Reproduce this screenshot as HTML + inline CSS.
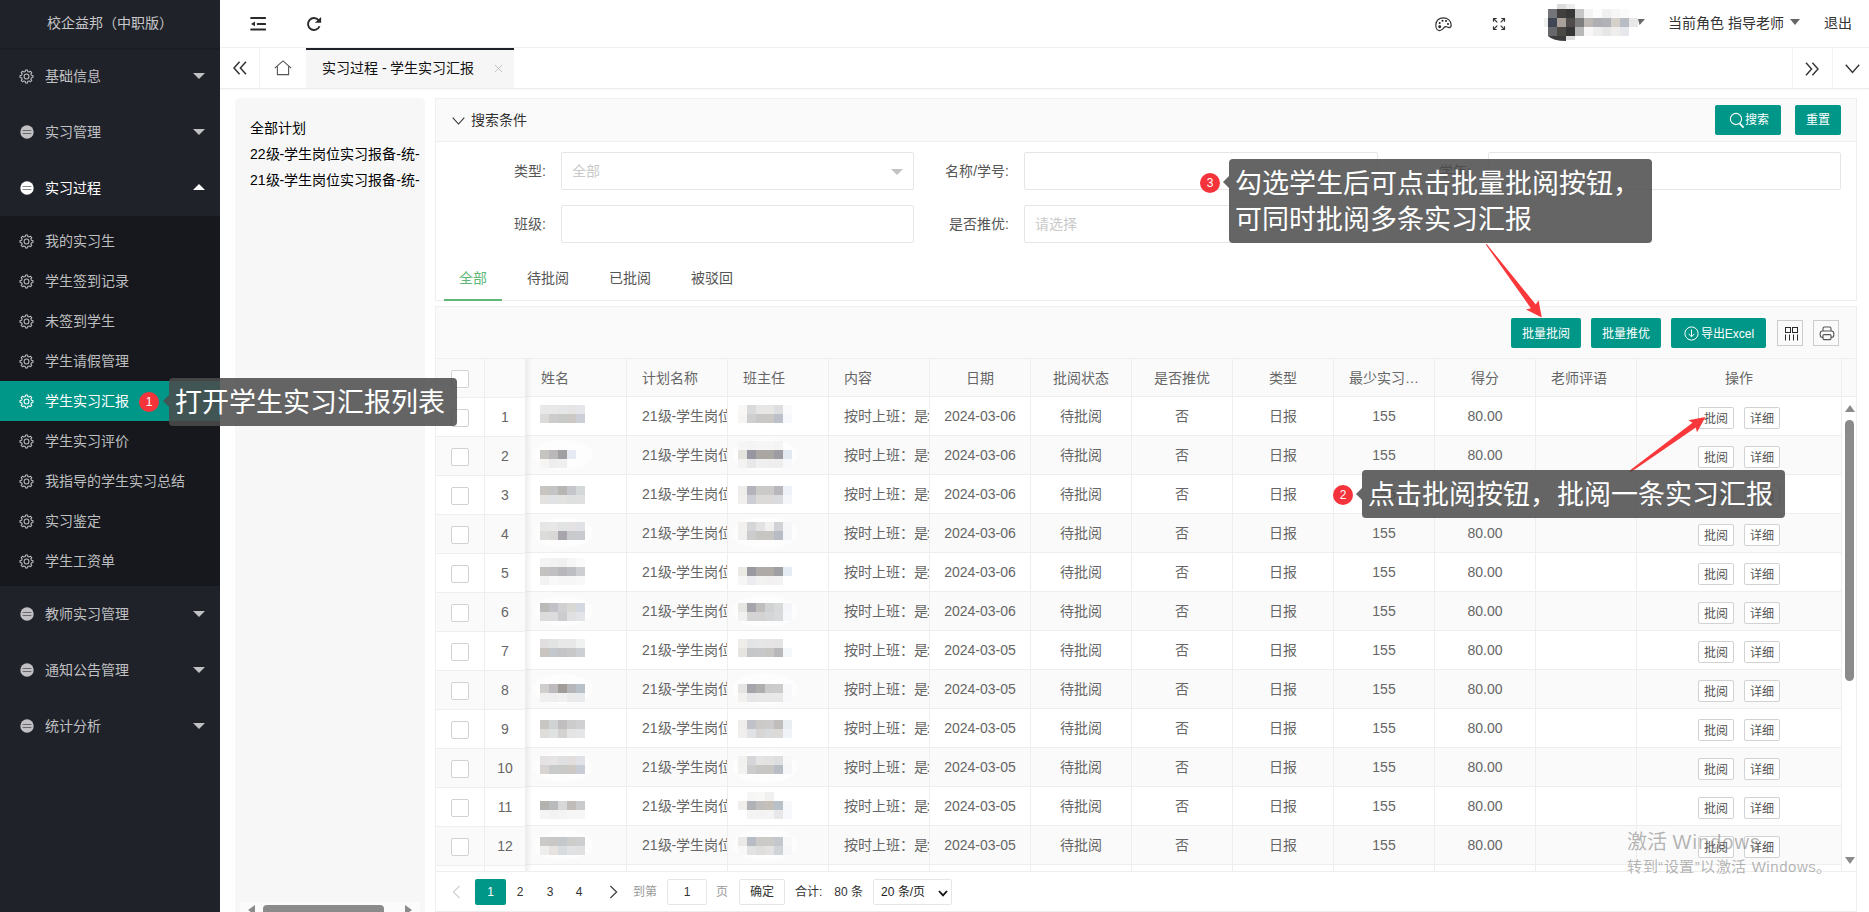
<!DOCTYPE html>
<html lang="zh-CN"><head><meta charset="utf-8"><title>校企益邦</title>
<style>
*{box-sizing:border-box;margin:0;padding:0}
html,body{width:1869px;height:912px;overflow:hidden;background:#fff}
body{font-family:"Liberation Sans",sans-serif;font-size:14px;color:#333;position:relative}
.abs{position:absolute}
/* sidebar */
#side{position:absolute;left:0;top:0;width:220px;height:912px;background:#20222a;color:rgba(255,255,255,.7)}
#logo{position:absolute;left:0;top:0;width:220px;height:48px;line-height:46px;text-align:center;color:rgba(255,255,255,.75);font-size:14.5px;box-shadow:0 1px 2px rgba(0,0,0,.25);padding-right:8px}
.m1{position:absolute;left:0;width:220px;height:56px;line-height:56px;font-size:14px;color:rgba(255,255,255,.72);padding-left:45px}
.m1.on{color:#fff}
.m1 .ic{position:absolute;left:20px;top:21px;width:14px;height:14px}
.m1 .car{position:absolute;left:193px;top:25px;width:0;height:0;border-left:6px solid transparent;border-right:6px solid transparent;border-top:6px solid rgba(255,255,255,.72)}
.m1.on .car{border-top:none;border-bottom:6px solid #fff;top:24px}
#sub{position:absolute;left:0;top:216px;width:220px;height:370px;background:#16181d}
.m2{position:absolute;left:0;width:220px;height:40px;line-height:40px;font-size:14px;color:rgba(255,255,255,.72);padding-left:45px}
.m2.sel{background:#009688;color:#fff}
.m2 svg{position:absolute;left:20px;top:13px;width:14px;height:14px}
.m1 .ic svg{display:block;width:100%;height:100%}
.m1 .ic.g{left:19px;top:21px;width:15px;height:15px}
.m1 .ic.d{left:20px;top:21px;width:14px;height:14px}
.m2 svg{left:19px;top:13px;width:15px;height:15px}
#logo{font-size:14px;padding-right:0}
/* header */
#hdr{position:absolute;left:220px;top:0;width:1649px;height:48px;background:#fff;border-bottom:1px solid #f0f0f0}
#hdr .abs{margin-left:-220px}
.ht{height:47px;line-height:46px;font-size:14px;color:#333;white-space:nowrap}
#tabs{position:absolute;left:220px;top:48px;width:1649px;height:41px;background:#fff;border-bottom:1px solid #ececec;box-shadow:0 1px 2px rgba(0,0,0,.04)}
.vsep{top:0;width:1px;height:40px;background:#f3f3f3}
#tabon{position:absolute;left:86px;top:0;width:208px;height:40px;background:#f6f6f6;border-top:2px solid #20222a;line-height:37px;font-size:14px;color:#111;padding-left:16px;white-space:nowrap}
/* left panel */
#lp{position:absolute;left:235px;top:98px;width:190px;height:814px;background:#f7f7f7;border-radius:5px 5px 0 0}
.lpt{position:absolute;left:15px;font-size:14px;color:#000;line-height:16px;white-space:nowrap}
#lpsb{position:absolute;left:5px;top:804px;width:180px;height:10px;background:#fbfbfb}
#lpsb .th{position:absolute;left:23px;top:3px;width:121px;height:10px;border-radius:4px;background:#8b8b8b}
#lpsb .al{position:absolute;left:8px;top:3px;border-top:5px solid transparent;border-bottom:5px solid transparent;border-right:7px solid #8b8b8b}
#lpsb .ar{position:absolute;left:165px;top:3px;border-top:5px solid transparent;border-bottom:5px solid transparent;border-left:7px solid #8b8b8b}
/* card 1 */
#card1{position:absolute;left:436px;top:98px;width:1421px;height:203px;background:#fff;border:1px solid #eee;border-top-color:#f0f0f0}
#c1h{position:absolute;left:0;top:0;width:1419px;height:43px;background:#fafafa;border-bottom:1px solid #eee}
.gbtn{position:absolute;background:#009688;color:#fff;font-size:12px;text-align:center;border-radius:2px;white-space:nowrap}
.flab{position:absolute;height:38px;line-height:36px;text-align:right;font-size:14px;color:#555;white-space:nowrap}
.finp{position:absolute;height:38px;border:1px solid #e6e6e6;border-radius:2px;background:#fff;line-height:36px;padding-left:10px;font-size:14px}
.finp .ph{color:#c9c9c9}
.selcar{position:absolute;right:10px;top:16px;border-left:6px solid transparent;border-right:6px solid transparent;border-top:6px solid #c2c2c2}
.tab{position:absolute;top:160px;height:41px;line-height:38px;text-align:center;font-size:14px;color:#555}
.tab.on{color:#5fb878;border-bottom:2px solid #5fb878}
#card1{left:435px;width:1422px}
#c1h{width:1420px}
/* card2 */
#card2{position:absolute;left:435px;top:306px;width:1422px;height:606px;background:#fff;border:1px solid #eee;overflow:hidden}
#card2>*{margin-left:-1px;margin-top:-1px}
#tbar{position:absolute;left:1px;top:1px;width:1420px;height:52px;background:#fafafa;border-bottom:1px solid #eee}
.ibtn{position:absolute;width:26px;height:26px;border:1px solid #ccc;background:#fafafa}
#thead{position:absolute;left:1px;width:1420px;height:40px;background:#fafafa;border-bottom:1px solid #eee}
.vl{position:absolute;top:53px;width:1px;height:513px;background:#eee}
.th{position:absolute;height:38px;line-height:38px;font-size:14px;color:#666;white-space:nowrap;overflow:hidden}
.th.l,.td.l{text-align:left;padding-left:15px}
.th.c,.td.c{text-align:center}
.tr{position:absolute;left:1px;width:1406px;border-bottom:1px solid #eee;background:#fff}
.tr.ev{background:#fafafa}
.td{position:absolute;top:0;height:38px;line-height:38px;font-size:14px;color:#666;white-space:nowrap;overflow:hidden}
.cb{position:absolute;width:18px;height:18px;border:1px solid #d2d2d2;border-radius:2px;background:#fff}
.xb{position:absolute;top:11px;width:36px;height:21px;line-height:19px;border:1px solid #d2d2d2;border-radius:2px;background:#fff;font-size:12px;color:#555;text-align:center}
#fshadow{position:absolute;left:91px;top:53px;width:6px;height:513px;background:linear-gradient(90deg,rgba(0,0,0,.06),rgba(0,0,0,0))}
#vsb{position:absolute;left:1407px;top:92px;width:14px;height:474px;background:#fff}
#vsb .up{position:absolute;left:3px;top:8px;border-left:5px solid transparent;border-right:5px solid transparent;border-bottom:7px solid #8b8b8b}
#vsb .dn{position:absolute;left:3px;top:459px;border-left:5px solid transparent;border-right:5px solid transparent;border-top:7px solid #8b8b8b}
#vsb .th2{position:absolute;left:3px;top:23px;width:9px;height:260px;border-radius:5px;background:#8b8b8b}
#pg{position:absolute;left:1px;top:566px;width:1420px;height:40px;background:#fff;border-top:1px solid #eee}
.pcur{width:31px;height:26px;line-height:26px;background:#009688;color:#fff;font-size:12px;text-align:center;border-radius:2px}
.pn{top:8px;width:20px;height:26px;line-height:26px;font-size:12px;color:#333;text-align:center}
.pt{top:8px;height:26px;line-height:26px;font-size:12px;white-space:nowrap}
.pin{height:26px;line-height:24px;border:1px solid #e6e6e6;border-radius:2px;font-size:12px;color:#333;text-align:center;white-space:nowrap}
.tip{position:absolute;background:rgba(76,76,76,.86);color:#fff;font-size:27px;border-radius:4px;white-space:nowrap}
.tarr{position:absolute;border-top:6px solid transparent;border-bottom:6px solid transparent;border-right:6px solid rgba(76,76,76,.86)}
.bdg{position:absolute;width:20px;height:20px;border-radius:50%;background:#f5333a;color:#fff;font-size:12px;line-height:20px;text-align:center}
/* card2 v2 */
#card2>*{margin:0}
#c2in{position:absolute;left:-436px;top:-307px;width:1869px;height:912px}
#tbar{left:436px;top:307px;width:1420px;height:52px}
#thead{left:436px;top:359px;width:1420px;height:39px}
.vl{top:359px;height:512px}
.tr{left:436px;width:1406px}
.xb{top:9px;height:22px;line-height:20px}
#fshadow{left:526px;top:359px;height:512px}
#vsb{left:1842px;top:398px;width:14px;height:473px}
#pg{left:436px;top:871px;width:1420px;height:40px}
.pn,.pt{top:879px}
.td{line-height:36px}
/* v3 rows */
.tr{left:526px;width:1316px}
.trl{position:absolute;left:436px;width:89px;border-bottom:1px solid #eee;background:#fff}
.trl.ev{background:#fafafa}
.td{line-height:38px}
.xb{top:10px}
#thead{height:38px}
#theadl{position:absolute;left:436px;top:359px;width:89px;height:39px;background:#fafafa;border-bottom:1px solid #eee}
.tab{top:161px;line-height:36px}
.gbtn{line-height:31px !important}
.flab{line-height:38px}
#vsb .up{top:7px}
#vsb .th2{top:22px;height:261px}
#c2in .gbtn{line-height:33px !important}
.xb{line-height:22px}

</style></head>
<body>
<div id="side">
<div id="logo">校企益邦（中职版）</div>
<div class="m1" style="top:48px"><span class="ic g"><svg viewBox="0 0 16 16"><path d="M6.66 2.77 L6.90 1.09 L9.10 1.09 L9.34 2.77 L10.75 3.35 L12.11 2.34 L13.66 3.89 L12.65 5.25 L13.23 6.66 L14.91 6.90 L14.91 9.10 L13.23 9.34 L12.65 10.75 L13.66 12.11 L12.11 13.66 L10.75 12.65 L9.34 13.23 L9.10 14.91 L6.90 14.91 L6.66 13.23 L5.25 12.65 L3.89 13.66 L2.34 12.11 L3.35 10.75 L2.77 9.34 L1.09 9.10 L1.09 6.90 L2.77 6.66 L3.35 5.25 L2.34 3.89 L3.89 2.34 L5.25 3.35Z" fill="none" stroke="currentColor" stroke-width="1.1" stroke-linejoin="round"/><circle cx="8" cy="8" r="2.6" fill="none" stroke="currentColor" stroke-width="1.1"/></svg></span>基础信息<i class="car"></i></div>
<div class="m1" style="top:104px"><span class="ic d"><svg viewBox="0 0 14 14"><circle cx="7" cy="7" r="6.7" fill="currentColor"/><rect x="2.6" y="5" width="8.8" height="1" fill="#20222a" opacity=".55"/><rect x="2.6" y="8" width="8.8" height="1" fill="#20222a" opacity=".55"/></svg></span>实习管理<i class="car"></i></div>
<div class="m1 on" style="top:160px"><span class="ic d"><svg viewBox="0 0 14 14"><circle cx="7" cy="7" r="6.7" fill="currentColor"/><rect x="2.6" y="5" width="8.8" height="1" fill="#20222a" opacity=".55"/><rect x="2.6" y="8" width="8.8" height="1" fill="#20222a" opacity=".55"/></svg></span>实习过程<i class="car"></i></div>
<div id="sub">
<div class="m2" style="top:5px"><svg viewBox="0 0 16 16"><path d="M6.66 2.77 L6.90 1.09 L9.10 1.09 L9.34 2.77 L10.75 3.35 L12.11 2.34 L13.66 3.89 L12.65 5.25 L13.23 6.66 L14.91 6.90 L14.91 9.10 L13.23 9.34 L12.65 10.75 L13.66 12.11 L12.11 13.66 L10.75 12.65 L9.34 13.23 L9.10 14.91 L6.90 14.91 L6.66 13.23 L5.25 12.65 L3.89 13.66 L2.34 12.11 L3.35 10.75 L2.77 9.34 L1.09 9.10 L1.09 6.90 L2.77 6.66 L3.35 5.25 L2.34 3.89 L3.89 2.34 L5.25 3.35Z" fill="none" stroke="currentColor" stroke-width="1.1" stroke-linejoin="round"/><circle cx="8" cy="8" r="2.6" fill="none" stroke="currentColor" stroke-width="1.1"/></svg>我的实习生</div>
<div class="m2" style="top:45px"><svg viewBox="0 0 16 16"><path d="M6.66 2.77 L6.90 1.09 L9.10 1.09 L9.34 2.77 L10.75 3.35 L12.11 2.34 L13.66 3.89 L12.65 5.25 L13.23 6.66 L14.91 6.90 L14.91 9.10 L13.23 9.34 L12.65 10.75 L13.66 12.11 L12.11 13.66 L10.75 12.65 L9.34 13.23 L9.10 14.91 L6.90 14.91 L6.66 13.23 L5.25 12.65 L3.89 13.66 L2.34 12.11 L3.35 10.75 L2.77 9.34 L1.09 9.10 L1.09 6.90 L2.77 6.66 L3.35 5.25 L2.34 3.89 L3.89 2.34 L5.25 3.35Z" fill="none" stroke="currentColor" stroke-width="1.1" stroke-linejoin="round"/><circle cx="8" cy="8" r="2.6" fill="none" stroke="currentColor" stroke-width="1.1"/></svg>学生签到记录</div>
<div class="m2" style="top:85px"><svg viewBox="0 0 16 16"><path d="M6.66 2.77 L6.90 1.09 L9.10 1.09 L9.34 2.77 L10.75 3.35 L12.11 2.34 L13.66 3.89 L12.65 5.25 L13.23 6.66 L14.91 6.90 L14.91 9.10 L13.23 9.34 L12.65 10.75 L13.66 12.11 L12.11 13.66 L10.75 12.65 L9.34 13.23 L9.10 14.91 L6.90 14.91 L6.66 13.23 L5.25 12.65 L3.89 13.66 L2.34 12.11 L3.35 10.75 L2.77 9.34 L1.09 9.10 L1.09 6.90 L2.77 6.66 L3.35 5.25 L2.34 3.89 L3.89 2.34 L5.25 3.35Z" fill="none" stroke="currentColor" stroke-width="1.1" stroke-linejoin="round"/><circle cx="8" cy="8" r="2.6" fill="none" stroke="currentColor" stroke-width="1.1"/></svg>未签到学生</div>
<div class="m2" style="top:125px"><svg viewBox="0 0 16 16"><path d="M6.66 2.77 L6.90 1.09 L9.10 1.09 L9.34 2.77 L10.75 3.35 L12.11 2.34 L13.66 3.89 L12.65 5.25 L13.23 6.66 L14.91 6.90 L14.91 9.10 L13.23 9.34 L12.65 10.75 L13.66 12.11 L12.11 13.66 L10.75 12.65 L9.34 13.23 L9.10 14.91 L6.90 14.91 L6.66 13.23 L5.25 12.65 L3.89 13.66 L2.34 12.11 L3.35 10.75 L2.77 9.34 L1.09 9.10 L1.09 6.90 L2.77 6.66 L3.35 5.25 L2.34 3.89 L3.89 2.34 L5.25 3.35Z" fill="none" stroke="currentColor" stroke-width="1.1" stroke-linejoin="round"/><circle cx="8" cy="8" r="2.6" fill="none" stroke="currentColor" stroke-width="1.1"/></svg>学生请假管理</div>
<div class="m2 sel" style="top:165px"><svg viewBox="0 0 16 16"><path d="M6.66 2.77 L6.90 1.09 L9.10 1.09 L9.34 2.77 L10.75 3.35 L12.11 2.34 L13.66 3.89 L12.65 5.25 L13.23 6.66 L14.91 6.90 L14.91 9.10 L13.23 9.34 L12.65 10.75 L13.66 12.11 L12.11 13.66 L10.75 12.65 L9.34 13.23 L9.10 14.91 L6.90 14.91 L6.66 13.23 L5.25 12.65 L3.89 13.66 L2.34 12.11 L3.35 10.75 L2.77 9.34 L1.09 9.10 L1.09 6.90 L2.77 6.66 L3.35 5.25 L2.34 3.89 L3.89 2.34 L5.25 3.35Z" fill="none" stroke="currentColor" stroke-width="1.1" stroke-linejoin="round"/><circle cx="8" cy="8" r="2.6" fill="none" stroke="currentColor" stroke-width="1.1"/></svg>学生实习汇报</div>
<div class="m2" style="top:205px"><svg viewBox="0 0 16 16"><path d="M6.66 2.77 L6.90 1.09 L9.10 1.09 L9.34 2.77 L10.75 3.35 L12.11 2.34 L13.66 3.89 L12.65 5.25 L13.23 6.66 L14.91 6.90 L14.91 9.10 L13.23 9.34 L12.65 10.75 L13.66 12.11 L12.11 13.66 L10.75 12.65 L9.34 13.23 L9.10 14.91 L6.90 14.91 L6.66 13.23 L5.25 12.65 L3.89 13.66 L2.34 12.11 L3.35 10.75 L2.77 9.34 L1.09 9.10 L1.09 6.90 L2.77 6.66 L3.35 5.25 L2.34 3.89 L3.89 2.34 L5.25 3.35Z" fill="none" stroke="currentColor" stroke-width="1.1" stroke-linejoin="round"/><circle cx="8" cy="8" r="2.6" fill="none" stroke="currentColor" stroke-width="1.1"/></svg>学生实习评价</div>
<div class="m2" style="top:245px"><svg viewBox="0 0 16 16"><path d="M6.66 2.77 L6.90 1.09 L9.10 1.09 L9.34 2.77 L10.75 3.35 L12.11 2.34 L13.66 3.89 L12.65 5.25 L13.23 6.66 L14.91 6.90 L14.91 9.10 L13.23 9.34 L12.65 10.75 L13.66 12.11 L12.11 13.66 L10.75 12.65 L9.34 13.23 L9.10 14.91 L6.90 14.91 L6.66 13.23 L5.25 12.65 L3.89 13.66 L2.34 12.11 L3.35 10.75 L2.77 9.34 L1.09 9.10 L1.09 6.90 L2.77 6.66 L3.35 5.25 L2.34 3.89 L3.89 2.34 L5.25 3.35Z" fill="none" stroke="currentColor" stroke-width="1.1" stroke-linejoin="round"/><circle cx="8" cy="8" r="2.6" fill="none" stroke="currentColor" stroke-width="1.1"/></svg>我指导的学生实习总结</div>
<div class="m2" style="top:285px"><svg viewBox="0 0 16 16"><path d="M6.66 2.77 L6.90 1.09 L9.10 1.09 L9.34 2.77 L10.75 3.35 L12.11 2.34 L13.66 3.89 L12.65 5.25 L13.23 6.66 L14.91 6.90 L14.91 9.10 L13.23 9.34 L12.65 10.75 L13.66 12.11 L12.11 13.66 L10.75 12.65 L9.34 13.23 L9.10 14.91 L6.90 14.91 L6.66 13.23 L5.25 12.65 L3.89 13.66 L2.34 12.11 L3.35 10.75 L2.77 9.34 L1.09 9.10 L1.09 6.90 L2.77 6.66 L3.35 5.25 L2.34 3.89 L3.89 2.34 L5.25 3.35Z" fill="none" stroke="currentColor" stroke-width="1.1" stroke-linejoin="round"/><circle cx="8" cy="8" r="2.6" fill="none" stroke="currentColor" stroke-width="1.1"/></svg>实习鉴定</div>
<div class="m2" style="top:325px"><svg viewBox="0 0 16 16"><path d="M6.66 2.77 L6.90 1.09 L9.10 1.09 L9.34 2.77 L10.75 3.35 L12.11 2.34 L13.66 3.89 L12.65 5.25 L13.23 6.66 L14.91 6.90 L14.91 9.10 L13.23 9.34 L12.65 10.75 L13.66 12.11 L12.11 13.66 L10.75 12.65 L9.34 13.23 L9.10 14.91 L6.90 14.91 L6.66 13.23 L5.25 12.65 L3.89 13.66 L2.34 12.11 L3.35 10.75 L2.77 9.34 L1.09 9.10 L1.09 6.90 L2.77 6.66 L3.35 5.25 L2.34 3.89 L3.89 2.34 L5.25 3.35Z" fill="none" stroke="currentColor" stroke-width="1.1" stroke-linejoin="round"/><circle cx="8" cy="8" r="2.6" fill="none" stroke="currentColor" stroke-width="1.1"/></svg>学生工资单</div>
</div>
<div class="m1" style="top:586px"><span class="ic d"><svg viewBox="0 0 14 14"><circle cx="7" cy="7" r="6.7" fill="currentColor"/><rect x="2.6" y="5" width="8.8" height="1" fill="#20222a" opacity=".55"/><rect x="2.6" y="8" width="8.8" height="1" fill="#20222a" opacity=".55"/></svg></span>教师实习管理<i class="car"></i></div>
<div class="m1" style="top:642px"><span class="ic d"><svg viewBox="0 0 14 14"><circle cx="7" cy="7" r="6.7" fill="currentColor"/><rect x="2.6" y="5" width="8.8" height="1" fill="#20222a" opacity=".55"/><rect x="2.6" y="8" width="8.8" height="1" fill="#20222a" opacity=".55"/></svg></span>通知公告管理<i class="car"></i></div>
<div class="m1" style="top:698px"><span class="ic d"><svg viewBox="0 0 14 14"><circle cx="7" cy="7" r="6.7" fill="currentColor"/><rect x="2.6" y="5" width="8.8" height="1" fill="#20222a" opacity=".55"/><rect x="2.6" y="8" width="8.8" height="1" fill="#20222a" opacity=".55"/></svg></span>统计分析<i class="car"></i></div>
</div>

<div id="hdr">
<svg class="abs" style="left:250px;top:16px" width="17" height="16" viewBox="0 0 17 16"><g fill="#2a2a2a"><rect x="0.3" y="1.1" width="15.7" height="2" rx=".6"/><rect x="6.9" y="7" width="9.1" height="2" rx=".6"/><rect x="0.3" y="12.6" width="15.7" height="2" rx=".6"/><path d="M1 7.95 L5 5.6 L5 10.3Z"/></g></svg>
<svg class="abs" style="left:306px;top:16px" width="16" height="16" viewBox="0 0 16 16"><path d="M12.6 4.14 A6 6 0 1 0 13.56 10.25" fill="none" stroke="#2a2a2a" stroke-width="1.9"/><path d="M15.1 1.1 L15.1 6.8 L8.9 6.8Z" fill="#2a2a2a"/></svg>
<svg class="abs" style="left:1435px;top:17px" width="17" height="15" viewBox="0 0 17 15"><path d="M0.8 8 C0.8 3.5 4 0.8 8.2 0.8 C12.8 0.8 16.2 3.8 16.2 8 C16.2 9.8 15.4 10.6 14 10.6 C12.6 10.6 12 9.4 10.6 9.6 C8.6 10 8.4 11.6 7 12.6 C5.6 13.6 3.6 13.8 2.2 12.6 C1.2 11.6 0.8 10 0.8 8Z" fill="none" stroke="#333" stroke-width="1.15"/><circle cx="4.7" cy="6" r="1" fill="#222"/><circle cx="7.5" cy="3.8" r="1" fill="#222"/><circle cx="11" cy="4" r="1" fill="#222"/><circle cx="13" cy="7" r="1" fill="#222"/><circle cx="4.7" cy="9.8" r="1.45" fill="#222"/></svg>
<svg class="abs" style="left:1492px;top:17px" width="14" height="14" viewBox="0 0 14 14"><g fill="none" stroke="#333" stroke-width="1.15"><path d="M1.5 4.7 V1.5 H4.7 M1.5 1.5 L5.3 5.3"/><path d="M9.3 1.5 H12.5 V4.7 M12.5 1.5 L8.7 5.3"/><path d="M1.5 9.3 V12.5 H4.7 M1.5 12.5 L5.3 8.7"/><path d="M9.3 12.5 H12.5 V9.3 M12.5 12.5 L8.7 8.7"/></g></svg>
<svg class="abs" style="left:1539px;top:4px" width="100" height="38" viewBox="1539 4 100 38" shape-rendering="crispEdges"><rect x="1557" y="4" width="9" height="5" fill="#dcdcdc"/><rect x="1566" y="4" width="9" height="5" fill="#ececec"/><rect x="1544" y="18" width="4" height="9" fill="#f0f0f0"/><rect x="1566" y="36" width="9" height="4" fill="#dedede"/><path d="M1548 36 H1566 L1566 41 Q1553 41 1548 36Z" fill="#3c3c3c" shape-rendering="auto"/><rect x="1548" y="9" width="9" height="9" fill="#737578"/><rect x="1557" y="9" width="9" height="9" fill="#42403e"/><rect x="1566" y="9" width="9" height="9" fill="#383838"/><rect x="1575" y="9" width="9" height="9" fill="#c6c6c6"/><rect x="1584" y="9" width="9" height="9" fill="#f4f4f4"/><rect x="1593" y="9" width="9" height="9" fill="#fcfcfc"/><rect x="1602" y="9" width="9" height="9" fill="#f0f0f0"/><rect x="1611" y="9" width="9" height="9" fill="#f6f6f6"/><rect x="1620" y="9" width="9" height="9" fill="#fafafa"/><rect x="1548" y="18" width="9" height="9" fill="#414654"/><rect x="1557" y="18" width="9" height="9" fill="#a8a099"/><rect x="1566" y="18" width="9" height="9" fill="#504c4b"/><rect x="1575" y="18" width="9" height="9" fill="#7e7e7e"/><rect x="1584" y="18" width="9" height="9" fill="#beb8b4"/><rect x="1593" y="18" width="9" height="9" fill="#aeafb3"/><rect x="1602" y="18" width="9" height="9" fill="#b0b2b6"/><rect x="1611" y="18" width="9" height="9" fill="#d6d0ca"/><rect x="1620" y="18" width="9" height="9" fill="#b8bcc4"/><rect x="1629" y="18" width="9" height="9" fill="#e8e8e8"/><rect x="1548" y="27" width="9" height="9" fill="#66686b"/><rect x="1557" y="27" width="9" height="9" fill="#4a4844"/><rect x="1566" y="27" width="9" height="9" fill="#363636"/><rect x="1575" y="27" width="9" height="9" fill="#b8b8b8"/><rect x="1584" y="27" width="9" height="9" fill="#f8f6f6"/><rect x="1593" y="27" width="9" height="9" fill="#eeeeee"/><rect x="1602" y="27" width="9" height="9" fill="#e6e6e6"/><rect x="1611" y="27" width="9" height="9" fill="#f0eeec"/><rect x="1620" y="27" width="9" height="9" fill="#e6e8ec"/></svg>
<svg class="abs" style="left:1638px;top:19px" width="7" height="6" viewBox="0 0 7 6"><path d="M0 0 H7 L1.6 6Z" fill="#666"/></svg>
<div class="abs ht" style="left:1668px;top:0;width:120px">当前角色 指导老师</div>
<i class="abs" style="left:1790px;top:19px;border-left:5.5px solid transparent;border-right:5.5px solid transparent;border-top:6px solid #666"></i>
<div class="abs ht" style="left:1824px;top:0">退出</div>
</div>
<div id="tabs">
<svg class="abs" style="left:13px;top:13px" width="14" height="14" viewBox="0 0 14 14"><path d="M6.6 0.8 L1 7 L6.6 13.2 M13 0.8 L7.4 7 L13 13.2" fill="none" stroke="#333" stroke-width="1.5"/></svg>
<i class="abs vsep" style="left:39px"></i>
<svg class="abs" style="left:54px;top:12px" width="18" height="16" viewBox="0 0 18 16"><path d="M0.8 8.2 L9 0.9 L17.2 8.2 M3.4 6.6 V14.6 H14.6 V6.6" fill="none" stroke="#555" stroke-width="1.1"/></svg>
<div id="tabon"><span>实习过程 - 学生实习汇报</span><svg class="abs" style="left:188px;top:14px" width="9" height="9" viewBox="0 0 10 10"><path d="M1 1 L9 9 M9 1 L1 9" stroke="#c2c2c2" stroke-width="1.1"/></svg></div>
<i class="abs vsep" style="left:1572px"></i><i class="abs vsep" style="left:1612px"></i>
<svg class="abs" style="left:1585px;top:14px" width="14" height="14" viewBox="0 0 14 14"><path d="M1 0.8 L6.6 7 L1 13.2 M7.4 0.8 L13 7 L7.4 13.2" fill="none" stroke="#333" stroke-width="1.4"/></svg>
<svg class="abs" style="left:1625px;top:16px" width="15" height="10" viewBox="0 0 15 10"><path d="M0.8 0.8 L7.5 8.4 L14.2 0.8" fill="none" stroke="#333" stroke-width="1.4"/></svg>
</div>

<div id="lp">
<div class="lpt" style="top:22px">全部计划</div>
<div class="lpt" style="top:48px">22级-学生岗位实习报备-统-</div>
<div class="lpt" style="top:74px">21级-学生岗位实习报备-统-</div>
<div id="lpsb"><i class="al"></i><i class="th"></i><i class="ar"></i></div>
</div>
<div id="card1">
<div id="c1h">
<svg class="abs" style="left:16px;top:18px" width="13" height="8" viewBox="0 0 13 8"><path d="M0.7 0.7 L6.5 7 L12.3 0.7" fill="none" stroke="#333" stroke-width="1.1"/></svg>
<span class="abs" style="left:35px;top:0;line-height:43px;font-size:14px;color:#333">搜索条件</span>
<div class="gbtn" style="left:1279px;top:6px;width:66px;height:30px;line-height:30px;padding-left:30px;text-align:left"><svg class="abs" style="left:14px;top:7px" width="17" height="17" viewBox="0 0 17 17"><circle cx="7" cy="7" r="5.6" fill="none" stroke="#fff" stroke-width="1.1"/><path d="M10.6 11.4 L14.6 15.6" stroke="#fff" stroke-width="1.8"/></svg>搜索</div>
<div class="gbtn" style="left:1359px;top:6px;width:46px;height:30px;line-height:30px">重置</div>
</div>
<div class="flab" style="left:60px;top:53px;width:50px">类型:</div>
<div class="finp" style="left:125px;top:53px;width:353px"><span class="ph">全部</span><i class="selcar"></i></div>
<div class="flab" style="left:480px;top:53px;width:93px">名称/学号:</div>
<div class="finp" style="left:588px;top:53px;width:354px"></div>
<div class="flab" style="left:980px;top:53px;width:55px">学年:</div>
<div class="finp" style="left:1052px;top:53px;width:353px"></div>
<div class="flab" style="left:60px;top:106px;width:50px">班级:</div>
<div class="finp" style="left:125px;top:106px;width:353px"></div>
<div class="flab" style="left:480px;top:106px;width:93px">是否推优:</div>
<div class="finp" style="left:588px;top:106px;width:354px"><span class="ph">请选择</span></div>
<div class="tab on" style="left:8px;width:58px">全部</div>
<div class="tab" style="left:76px;width:72px">待批阅</div>
<div class="tab" style="left:158px;width:72px">已批阅</div>
<div class="tab" style="left:240px;width:72px">被驳回</div>
</div>

<div id="card2"><div id="c2in">
<div id="tbar"></div>
<div class="gbtn" style="left:1511px;top:318px;width:70px;height:30px;line-height:30px">批量批阅</div>
<div class="gbtn" style="left:1591px;top:318px;width:70px;height:30px;line-height:30px">批量推优</div>
<div class="gbtn" style="left:1671px;top:318px;width:95px;height:30px;line-height:30px;padding-left:18px"><svg class="abs" style="left:13px;top:8px" width="15" height="15" viewBox="0 0 15 15"><circle cx="7.5" cy="7.5" r="6.6" fill="none" stroke="#fff" stroke-width="1"/><path d="M7.5 3.6 V10.6 M4.6 7.8 L7.5 10.8 L10.4 7.8" fill="none" stroke="#fff" stroke-width="1"/></svg>导出Excel</div>
<div class="ibtn" style="left:1777px;top:320px"><svg width="14" height="14" viewBox="0 0 14 14" style="position:absolute;left:7px;top:6px"><g fill="none" stroke="#2a2a2a" stroke-width="1"><rect x="0.5" y="0.5" width="5" height="5"/><rect x="7.5" y="0.5" width="5" height="5"/><path d="M0.5 7.5 V13.5 M4.5 7.5 V13.5 M8.5 7.5 V13.5 M12.5 7.5 V13.5"/></g></svg></div>
<div class="ibtn" style="left:1813px;top:320px"><svg width="16" height="15" viewBox="0 0 16 15" style="position:absolute;left:5px;top:5px"><g fill="none" stroke="#555" stroke-width="1.1"><path d="M4 5 V2.4 Q4 1 5.4 1 H10.6 Q12 1 12 2.4 V5"/><rect x="1.2" y="5" width="13.6" height="6.4" rx="2.4"/><rect x="4" y="8.6" width="8" height="5" rx="1" fill="#fafafa"/></g></svg></div>
<div id="thead"></div><div id="theadl"></div>
<div class="tr" style="top:397px;height:39px"><span class="td l" style="left:101px;width:100px">21级-学生岗位实习</span><span class="td l" style="left:303px;width:100px">按时上班：是<span style="margin-left:-1.5px">:</span>否</span><span class="td c" style="left:404px;width:100px">2024-03-06</span><span class="td c" style="left:505px;width:100px">待批阅</span><span class="td c" style="left:606px;width:100px">否</span><span class="td c" style="left:707px;width:100px">日报</span><span class="td c" style="left:808px;width:100px">155</span><span class="td c" style="left:909px;width:100px">80.00</span><span class="xb" style="left:1172px">批阅</span><span class="xb" style="left:1218px">详细</span></div>
<div class="trl" style="top:398px;height:39px"><i class="cb" style="left:15px;top:11px"></i><span class="td c" style="left:49px;width:40px">1</span></div>
<div class="tr ev" style="top:436px;height:39px"><span class="td l" style="left:101px;width:100px">21级-学生岗位实习</span><span class="td l" style="left:303px;width:100px">按时上班：是<span style="margin-left:-1.5px">:</span>否</span><span class="td c" style="left:404px;width:100px">2024-03-06</span><span class="td c" style="left:505px;width:100px">待批阅</span><span class="td c" style="left:606px;width:100px">否</span><span class="td c" style="left:707px;width:100px">日报</span><span class="td c" style="left:808px;width:100px">155</span><span class="td c" style="left:909px;width:100px">80.00</span><span class="xb" style="left:1172px">批阅</span><span class="xb" style="left:1218px">详细</span></div>
<div class="trl ev" style="top:437px;height:39px"><i class="cb" style="left:15px;top:11px"></i><span class="td c" style="left:49px;width:40px">2</span></div>
<div class="tr" style="top:475px;height:39px"><span class="td l" style="left:101px;width:100px">21级-学生岗位实习</span><span class="td l" style="left:303px;width:100px">按时上班：是<span style="margin-left:-1.5px">:</span>否</span><span class="td c" style="left:404px;width:100px">2024-03-06</span><span class="td c" style="left:505px;width:100px">待批阅</span><span class="td c" style="left:606px;width:100px">否</span><span class="td c" style="left:707px;width:100px">日报</span><span class="td c" style="left:808px;width:100px">155</span><span class="td c" style="left:909px;width:100px">80.00</span><span class="xb" style="left:1172px">批阅</span><span class="xb" style="left:1218px">详细</span></div>
<div class="trl" style="top:476px;height:39px"><i class="cb" style="left:15px;top:11px"></i><span class="td c" style="left:49px;width:40px">3</span></div>
<div class="tr ev" style="top:514px;height:39px"><span class="td l" style="left:101px;width:100px">21级-学生岗位实习</span><span class="td l" style="left:303px;width:100px">按时上班：是<span style="margin-left:-1.5px">:</span>否</span><span class="td c" style="left:404px;width:100px">2024-03-06</span><span class="td c" style="left:505px;width:100px">待批阅</span><span class="td c" style="left:606px;width:100px">否</span><span class="td c" style="left:707px;width:100px">日报</span><span class="td c" style="left:808px;width:100px">155</span><span class="td c" style="left:909px;width:100px">80.00</span><span class="xb" style="left:1172px">批阅</span><span class="xb" style="left:1218px">详细</span></div>
<div class="trl ev" style="top:515px;height:39px"><i class="cb" style="left:15px;top:11px"></i><span class="td c" style="left:49px;width:40px">4</span></div>
<div class="tr" style="top:553px;height:39px"><span class="td l" style="left:101px;width:100px">21级-学生岗位实习</span><span class="td l" style="left:303px;width:100px">按时上班：是<span style="margin-left:-1.5px">:</span>否</span><span class="td c" style="left:404px;width:100px">2024-03-06</span><span class="td c" style="left:505px;width:100px">待批阅</span><span class="td c" style="left:606px;width:100px">否</span><span class="td c" style="left:707px;width:100px">日报</span><span class="td c" style="left:808px;width:100px">155</span><span class="td c" style="left:909px;width:100px">80.00</span><span class="xb" style="left:1172px">批阅</span><span class="xb" style="left:1218px">详细</span></div>
<div class="trl" style="top:554px;height:39px"><i class="cb" style="left:15px;top:11px"></i><span class="td c" style="left:49px;width:40px">5</span></div>
<div class="tr ev" style="top:592px;height:39px"><span class="td l" style="left:101px;width:100px">21级-学生岗位实习</span><span class="td l" style="left:303px;width:100px">按时上班：是<span style="margin-left:-1.5px">:</span>否</span><span class="td c" style="left:404px;width:100px">2024-03-06</span><span class="td c" style="left:505px;width:100px">待批阅</span><span class="td c" style="left:606px;width:100px">否</span><span class="td c" style="left:707px;width:100px">日报</span><span class="td c" style="left:808px;width:100px">155</span><span class="td c" style="left:909px;width:100px">80.00</span><span class="xb" style="left:1172px">批阅</span><span class="xb" style="left:1218px">详细</span></div>
<div class="trl ev" style="top:593px;height:39px"><i class="cb" style="left:15px;top:11px"></i><span class="td c" style="left:49px;width:40px">6</span></div>
<div class="tr" style="top:631px;height:39px"><span class="td l" style="left:101px;width:100px">21级-学生岗位实习</span><span class="td l" style="left:303px;width:100px">按时上班：是<span style="margin-left:-1.5px">:</span>否</span><span class="td c" style="left:404px;width:100px">2024-03-05</span><span class="td c" style="left:505px;width:100px">待批阅</span><span class="td c" style="left:606px;width:100px">否</span><span class="td c" style="left:707px;width:100px">日报</span><span class="td c" style="left:808px;width:100px">155</span><span class="td c" style="left:909px;width:100px">80.00</span><span class="xb" style="left:1172px">批阅</span><span class="xb" style="left:1218px">详细</span></div>
<div class="trl" style="top:632px;height:39px"><i class="cb" style="left:15px;top:11px"></i><span class="td c" style="left:49px;width:40px">7</span></div>
<div class="tr ev" style="top:670px;height:39px"><span class="td l" style="left:101px;width:100px">21级-学生岗位实习</span><span class="td l" style="left:303px;width:100px">按时上班：是<span style="margin-left:-1.5px">:</span>否</span><span class="td c" style="left:404px;width:100px">2024-03-05</span><span class="td c" style="left:505px;width:100px">待批阅</span><span class="td c" style="left:606px;width:100px">否</span><span class="td c" style="left:707px;width:100px">日报</span><span class="td c" style="left:808px;width:100px">155</span><span class="td c" style="left:909px;width:100px">80.00</span><span class="xb" style="left:1172px">批阅</span><span class="xb" style="left:1218px">详细</span></div>
<div class="trl ev" style="top:671px;height:39px"><i class="cb" style="left:15px;top:11px"></i><span class="td c" style="left:49px;width:40px">8</span></div>
<div class="tr" style="top:709px;height:39px"><span class="td l" style="left:101px;width:100px">21级-学生岗位实习</span><span class="td l" style="left:303px;width:100px">按时上班：是<span style="margin-left:-1.5px">:</span>否</span><span class="td c" style="left:404px;width:100px">2024-03-05</span><span class="td c" style="left:505px;width:100px">待批阅</span><span class="td c" style="left:606px;width:100px">否</span><span class="td c" style="left:707px;width:100px">日报</span><span class="td c" style="left:808px;width:100px">155</span><span class="td c" style="left:909px;width:100px">80.00</span><span class="xb" style="left:1172px">批阅</span><span class="xb" style="left:1218px">详细</span></div>
<div class="trl" style="top:710px;height:39px"><i class="cb" style="left:15px;top:11px"></i><span class="td c" style="left:49px;width:40px">9</span></div>
<div class="tr ev" style="top:748px;height:39px"><span class="td l" style="left:101px;width:100px">21级-学生岗位实习</span><span class="td l" style="left:303px;width:100px">按时上班：是<span style="margin-left:-1.5px">:</span>否</span><span class="td c" style="left:404px;width:100px">2024-03-05</span><span class="td c" style="left:505px;width:100px">待批阅</span><span class="td c" style="left:606px;width:100px">否</span><span class="td c" style="left:707px;width:100px">日报</span><span class="td c" style="left:808px;width:100px">155</span><span class="td c" style="left:909px;width:100px">80.00</span><span class="xb" style="left:1172px">批阅</span><span class="xb" style="left:1218px">详细</span></div>
<div class="trl ev" style="top:749px;height:39px"><i class="cb" style="left:15px;top:11px"></i><span class="td c" style="left:49px;width:40px">10</span></div>
<div class="tr" style="top:787px;height:39px"><span class="td l" style="left:101px;width:100px">21级-学生岗位实习</span><span class="td l" style="left:303px;width:100px">按时上班：是<span style="margin-left:-1.5px">:</span>否</span><span class="td c" style="left:404px;width:100px">2024-03-05</span><span class="td c" style="left:505px;width:100px">待批阅</span><span class="td c" style="left:606px;width:100px">否</span><span class="td c" style="left:707px;width:100px">日报</span><span class="td c" style="left:808px;width:100px">155</span><span class="td c" style="left:909px;width:100px">80.00</span><span class="xb" style="left:1172px">批阅</span><span class="xb" style="left:1218px">详细</span></div>
<div class="trl" style="top:788px;height:39px"><i class="cb" style="left:15px;top:11px"></i><span class="td c" style="left:49px;width:40px">11</span></div>
<div class="tr ev" style="top:826px;height:39px"><span class="td l" style="left:101px;width:100px">21级-学生岗位实习</span><span class="td l" style="left:303px;width:100px">按时上班：是<span style="margin-left:-1.5px">:</span>否</span><span class="td c" style="left:404px;width:100px">2024-03-05</span><span class="td c" style="left:505px;width:100px">待批阅</span><span class="td c" style="left:606px;width:100px">否</span><span class="td c" style="left:707px;width:100px">日报</span><span class="td c" style="left:808px;width:100px">155</span><span class="td c" style="left:909px;width:100px">80.00</span><span class="xb" style="left:1172px">批阅</span><span class="xb" style="left:1218px">详细</span></div>
<div class="trl ev" style="top:827px;height:39px"><i class="cb" style="left:15px;top:11px"></i><span class="td c" style="left:49px;width:40px">12</span></div>
<div class="tr" style="top:865px;height:6px;border-bottom:none"></div>
<div class="trl" style="top:866px;height:5px;border-bottom:none"></div>
<svg class="abs" style="left:525px;top:397px" width="310" height="474" viewBox="525 397 310 474" ><ellipse cx="563" cy="455" rx="30" ry="15" fill="#fff" opacity=".55"/><ellipse cx="765" cy="455" rx="33" ry="16" fill="#fff" opacity=".55"/><ellipse cx="563" cy="533" rx="30" ry="15" fill="#fff" opacity=".55"/><ellipse cx="765" cy="533" rx="33" ry="16" fill="#fff" opacity=".55"/><ellipse cx="563" cy="611" rx="30" ry="15" fill="#fff" opacity=".55"/><ellipse cx="765" cy="611" rx="33" ry="16" fill="#fff" opacity=".55"/><ellipse cx="563" cy="689" rx="30" ry="15" fill="#fff" opacity=".55"/><ellipse cx="765" cy="689" rx="33" ry="16" fill="#fff" opacity=".55"/><ellipse cx="563" cy="767" rx="30" ry="15" fill="#fff" opacity=".55"/><ellipse cx="765" cy="767" rx="33" ry="16" fill="#fff" opacity=".55"/><ellipse cx="563" cy="845" rx="30" ry="15" fill="#fff" opacity=".55"/><ellipse cx="765" cy="845" rx="33" ry="16" fill="#fff" opacity=".55"/><rect x="540" y="405" width="9" height="9" fill="#e8e8e8" shape-rendering="crispEdges"/><rect x="549" y="405" width="9" height="9" fill="#e8e8e8" shape-rendering="crispEdges"/><rect x="558" y="405" width="9" height="9" fill="#e4e6e8" shape-rendering="crispEdges"/><rect x="567" y="405" width="9" height="9" fill="#e6e4e4" shape-rendering="crispEdges"/><rect x="576" y="405" width="9" height="9" fill="#e4e6ea" shape-rendering="crispEdges"/><rect x="540" y="414" width="9" height="9" fill="#dcdad8" shape-rendering="crispEdges"/><rect x="549" y="414" width="9" height="9" fill="#cccccc" shape-rendering="crispEdges"/><rect x="558" y="414" width="9" height="9" fill="#c8cac8" shape-rendering="crispEdges"/><rect x="567" y="414" width="9" height="9" fill="#ccc8c6" shape-rendering="crispEdges"/><rect x="576" y="414" width="9" height="9" fill="#ccd0d6" shape-rendering="crispEdges"/><rect x="738" y="405" width="9" height="9" fill="#f8f7f5" shape-rendering="crispEdges"/><rect x="747" y="405" width="9" height="9" fill="#d8dadc" shape-rendering="crispEdges"/><rect x="756" y="405" width="9" height="9" fill="#e6e6e6" shape-rendering="crispEdges"/><rect x="765" y="405" width="9" height="9" fill="#e8e6e4" shape-rendering="crispEdges"/><rect x="774" y="405" width="9" height="9" fill="#dcdee0" shape-rendering="crispEdges"/><rect x="783" y="405" width="9" height="9" fill="#fafafc" shape-rendering="crispEdges"/><rect x="738" y="414" width="9" height="9" fill="#f6f5f3" shape-rendering="crispEdges"/><rect x="747" y="414" width="9" height="9" fill="#cfcfcf" shape-rendering="crispEdges"/><rect x="756" y="414" width="9" height="9" fill="#cac8c6" shape-rendering="crispEdges"/><rect x="765" y="414" width="9" height="9" fill="#cac8c4" shape-rendering="crispEdges"/><rect x="774" y="414" width="9" height="9" fill="#bcc0c8" shape-rendering="crispEdges"/><rect x="783" y="414" width="9" height="9" fill="#f6f8fc" shape-rendering="crispEdges"/><rect x="540" y="450" width="9" height="9" fill="#c6c4c0" shape-rendering="crispEdges"/><rect x="549" y="450" width="9" height="9" fill="#bab8b8" shape-rendering="crispEdges"/><rect x="558" y="450" width="9" height="9" fill="#a0a0a2" shape-rendering="crispEdges"/><rect x="567" y="450" width="9" height="9" fill="#e6eaf2" shape-rendering="crispEdges"/><rect x="540" y="459" width="9" height="9" fill="#f6f5f3" shape-rendering="crispEdges"/><rect x="549" y="459" width="9" height="9" fill="#eeeeee" shape-rendering="crispEdges"/><rect x="558" y="459" width="9" height="9" fill="#f0f0f0" shape-rendering="crispEdges"/><rect x="738" y="441" width="9" height="9" fill="#f6f6f6" shape-rendering="crispEdges"/><rect x="747" y="441" width="9" height="9" fill="#f4f4f4" shape-rendering="crispEdges"/><rect x="756" y="441" width="9" height="9" fill="#f6f6f6" shape-rendering="crispEdges"/><rect x="765" y="441" width="9" height="9" fill="#f6f6f6" shape-rendering="crispEdges"/><rect x="774" y="441" width="9" height="9" fill="#f4f4f4" shape-rendering="crispEdges"/><rect x="738" y="450" width="9" height="9" fill="#e4e2dc" shape-rendering="crispEdges"/><rect x="747" y="450" width="9" height="9" fill="#9896a0" shape-rendering="crispEdges"/><rect x="756" y="450" width="9" height="9" fill="#aaa6a4" shape-rendering="crispEdges"/><rect x="765" y="450" width="9" height="9" fill="#aaa6a2" shape-rendering="crispEdges"/><rect x="774" y="450" width="9" height="9" fill="#9c9ca2" shape-rendering="crispEdges"/><rect x="783" y="450" width="9" height="9" fill="#e2e8f0" shape-rendering="crispEdges"/><rect x="738" y="459" width="9" height="9" fill="#f4f3f1" shape-rendering="crispEdges"/><rect x="747" y="459" width="9" height="9" fill="#e8e8ea" shape-rendering="crispEdges"/><rect x="756" y="459" width="9" height="9" fill="#f0f0f0" shape-rendering="crispEdges"/><rect x="765" y="459" width="9" height="9" fill="#f0eeee" shape-rendering="crispEdges"/><rect x="774" y="459" width="9" height="9" fill="#eeeeee" shape-rendering="crispEdges"/><rect x="783" y="459" width="9" height="9" fill="#f8f8fa" shape-rendering="crispEdges"/><rect x="540" y="486" width="9" height="9" fill="#c8c4c0" shape-rendering="crispEdges"/><rect x="549" y="486" width="9" height="9" fill="#c4c4c4" shape-rendering="crispEdges"/><rect x="558" y="486" width="9" height="9" fill="#b8b6b2" shape-rendering="crispEdges"/><rect x="567" y="486" width="9" height="9" fill="#c4c6cc" shape-rendering="crispEdges"/><rect x="576" y="486" width="9" height="9" fill="#d4d8d8" shape-rendering="crispEdges"/><rect x="540" y="495" width="9" height="9" fill="#e4e2e0" shape-rendering="crispEdges"/><rect x="549" y="495" width="9" height="9" fill="#e0e2e4" shape-rendering="crispEdges"/><rect x="558" y="495" width="9" height="9" fill="#e2e2e0" shape-rendering="crispEdges"/><rect x="567" y="495" width="9" height="9" fill="#dee0e0" shape-rendering="crispEdges"/><rect x="576" y="495" width="9" height="9" fill="#e0e0e0" shape-rendering="crispEdges"/><rect x="738" y="486" width="9" height="9" fill="#eeede9" shape-rendering="crispEdges"/><rect x="747" y="486" width="9" height="9" fill="#b4b2ba" shape-rendering="crispEdges"/><rect x="756" y="486" width="9" height="9" fill="#cccac8" shape-rendering="crispEdges"/><rect x="765" y="486" width="9" height="9" fill="#cccac8" shape-rendering="crispEdges"/><rect x="774" y="486" width="9" height="9" fill="#b8b8bc" shape-rendering="crispEdges"/><rect x="783" y="486" width="9" height="9" fill="#eef2f8" shape-rendering="crispEdges"/><rect x="738" y="495" width="9" height="9" fill="#f0efed" shape-rendering="crispEdges"/><rect x="747" y="495" width="9" height="9" fill="#cccdd2" shape-rendering="crispEdges"/><rect x="756" y="495" width="9" height="9" fill="#dcdad8" shape-rendering="crispEdges"/><rect x="765" y="495" width="9" height="9" fill="#dcdad8" shape-rendering="crispEdges"/><rect x="774" y="495" width="9" height="9" fill="#d8dade" shape-rendering="crispEdges"/><rect x="783" y="495" width="9" height="9" fill="#f4f6fa" shape-rendering="crispEdges"/><rect x="540" y="522" width="9" height="9" fill="#e6e6e4" shape-rendering="crispEdges"/><rect x="549" y="522" width="9" height="9" fill="#e8e8e8" shape-rendering="crispEdges"/><rect x="558" y="522" width="9" height="9" fill="#e2e4e4" shape-rendering="crispEdges"/><rect x="567" y="522" width="9" height="9" fill="#e4e2e2" shape-rendering="crispEdges"/><rect x="576" y="522" width="9" height="9" fill="#e0e2e6" shape-rendering="crispEdges"/><rect x="540" y="531" width="9" height="9" fill="#dcdcda" shape-rendering="crispEdges"/><rect x="549" y="531" width="9" height="9" fill="#dad8d6" shape-rendering="crispEdges"/><rect x="558" y="531" width="9" height="9" fill="#a8a6ac" shape-rendering="crispEdges"/><rect x="567" y="531" width="9" height="9" fill="#c8cacc" shape-rendering="crispEdges"/><rect x="576" y="531" width="9" height="9" fill="#c8cad0" shape-rendering="crispEdges"/><rect x="738" y="522" width="9" height="9" fill="#f2f1ef" shape-rendering="crispEdges"/><rect x="747" y="522" width="9" height="9" fill="#d4d6d8" shape-rendering="crispEdges"/><rect x="756" y="522" width="9" height="9" fill="#e2e2e2" shape-rendering="crispEdges"/><rect x="765" y="522" width="9" height="9" fill="#f0f0ee" shape-rendering="crispEdges"/><rect x="774" y="522" width="9" height="9" fill="#d0d2d6" shape-rendering="crispEdges"/><rect x="783" y="522" width="9" height="9" fill="#f6f6f8" shape-rendering="crispEdges"/><rect x="738" y="531" width="9" height="9" fill="#f0f0ee" shape-rendering="crispEdges"/><rect x="747" y="531" width="9" height="9" fill="#cccccc" shape-rendering="crispEdges"/><rect x="756" y="531" width="9" height="9" fill="#c8c6c2" shape-rendering="crispEdges"/><rect x="765" y="531" width="9" height="9" fill="#c8c6c2" shape-rendering="crispEdges"/><rect x="774" y="531" width="9" height="9" fill="#b8bcc4" shape-rendering="crispEdges"/><rect x="783" y="531" width="9" height="9" fill="#f4f6f8" shape-rendering="crispEdges"/><rect x="540" y="558" width="9" height="9" fill="#f4f4f4" shape-rendering="crispEdges"/><rect x="549" y="558" width="9" height="9" fill="#f2f2f2" shape-rendering="crispEdges"/><rect x="558" y="558" width="9" height="9" fill="#f0f0f0" shape-rendering="crispEdges"/><rect x="567" y="558" width="9" height="9" fill="#f6f6f6" shape-rendering="crispEdges"/><rect x="576" y="558" width="9" height="9" fill="#fafafa" shape-rendering="crispEdges"/><rect x="540" y="567" width="9" height="9" fill="#c4c2c0" shape-rendering="crispEdges"/><rect x="549" y="567" width="9" height="9" fill="#c0c0c2" shape-rendering="crispEdges"/><rect x="558" y="567" width="9" height="9" fill="#b8b8bc" shape-rendering="crispEdges"/><rect x="567" y="567" width="9" height="9" fill="#bcbec4" shape-rendering="crispEdges"/><rect x="576" y="567" width="9" height="9" fill="#ccced2" shape-rendering="crispEdges"/><rect x="540" y="576" width="9" height="9" fill="#f2f2f2" shape-rendering="crispEdges"/><rect x="549" y="576" width="9" height="9" fill="#f8f8f8" shape-rendering="crispEdges"/><rect x="558" y="576" width="9" height="9" fill="#f6f6f6" shape-rendering="crispEdges"/><rect x="567" y="576" width="9" height="9" fill="#f6f6f6" shape-rendering="crispEdges"/><rect x="576" y="576" width="9" height="9" fill="#f8f8f8" shape-rendering="crispEdges"/><rect x="738" y="567" width="9" height="9" fill="#eceae4" shape-rendering="crispEdges"/><rect x="747" y="567" width="9" height="9" fill="#9a98a0" shape-rendering="crispEdges"/><rect x="756" y="567" width="9" height="9" fill="#aeaaa8" shape-rendering="crispEdges"/><rect x="765" y="567" width="9" height="9" fill="#aeaaa6" shape-rendering="crispEdges"/><rect x="774" y="567" width="9" height="9" fill="#a0a0a4" shape-rendering="crispEdges"/><rect x="783" y="567" width="9" height="9" fill="#e6ecf4" shape-rendering="crispEdges"/><rect x="738" y="576" width="9" height="9" fill="#f6f6f6" shape-rendering="crispEdges"/><rect x="747" y="576" width="9" height="9" fill="#ececf0" shape-rendering="crispEdges"/><rect x="756" y="576" width="9" height="9" fill="#f2f2f0" shape-rendering="crispEdges"/><rect x="765" y="576" width="9" height="9" fill="#f2f0f0" shape-rendering="crispEdges"/><rect x="774" y="576" width="9" height="9" fill="#f2f2f2" shape-rendering="crispEdges"/><rect x="540" y="603" width="9" height="9" fill="#bcbab8" shape-rendering="crispEdges"/><rect x="549" y="603" width="9" height="9" fill="#c0c2c8" shape-rendering="crispEdges"/><rect x="558" y="603" width="9" height="9" fill="#d0d0d2" shape-rendering="crispEdges"/><rect x="567" y="603" width="9" height="9" fill="#d8d8d4" shape-rendering="crispEdges"/><rect x="576" y="603" width="9" height="9" fill="#d4d8e0" shape-rendering="crispEdges"/><rect x="540" y="612" width="9" height="9" fill="#dcdcdc" shape-rendering="crispEdges"/><rect x="549" y="612" width="9" height="9" fill="#dcdcde" shape-rendering="crispEdges"/><rect x="558" y="612" width="9" height="9" fill="#ccccce" shape-rendering="crispEdges"/><rect x="567" y="612" width="9" height="9" fill="#e0e0e2" shape-rendering="crispEdges"/><rect x="576" y="612" width="9" height="9" fill="#e2e4e8" shape-rendering="crispEdges"/><rect x="738" y="603" width="9" height="9" fill="#e8e6e2" shape-rendering="crispEdges"/><rect x="747" y="603" width="9" height="9" fill="#a4a4aa" shape-rendering="crispEdges"/><rect x="756" y="603" width="9" height="9" fill="#c0bebc" shape-rendering="crispEdges"/><rect x="765" y="603" width="9" height="9" fill="#d0d2d4" shape-rendering="crispEdges"/><rect x="774" y="603" width="9" height="9" fill="#d8dada" shape-rendering="crispEdges"/><rect x="783" y="603" width="9" height="9" fill="#f6f6fa" shape-rendering="crispEdges"/><rect x="738" y="612" width="9" height="9" fill="#f0f0ee" shape-rendering="crispEdges"/><rect x="747" y="612" width="9" height="9" fill="#d4d4d4" shape-rendering="crispEdges"/><rect x="756" y="612" width="9" height="9" fill="#d4d2d2" shape-rendering="crispEdges"/><rect x="765" y="612" width="9" height="9" fill="#d4d6d8" shape-rendering="crispEdges"/><rect x="774" y="612" width="9" height="9" fill="#d8dadc" shape-rendering="crispEdges"/><rect x="783" y="612" width="9" height="9" fill="#f6f8fa" shape-rendering="crispEdges"/><rect x="540" y="639" width="9" height="9" fill="#e0dede" shape-rendering="crispEdges"/><rect x="549" y="639" width="9" height="9" fill="#e2e4e4" shape-rendering="crispEdges"/><rect x="558" y="639" width="9" height="9" fill="#e8e8e8" shape-rendering="crispEdges"/><rect x="567" y="639" width="9" height="9" fill="#e8e8e8" shape-rendering="crispEdges"/><rect x="576" y="639" width="9" height="9" fill="#f0f2f2" shape-rendering="crispEdges"/><rect x="540" y="648" width="9" height="9" fill="#c8c4c0" shape-rendering="crispEdges"/><rect x="549" y="648" width="9" height="9" fill="#c4c8cc" shape-rendering="crispEdges"/><rect x="558" y="648" width="9" height="9" fill="#c4c4c6" shape-rendering="crispEdges"/><rect x="567" y="648" width="9" height="9" fill="#c8c8c8" shape-rendering="crispEdges"/><rect x="576" y="648" width="9" height="9" fill="#ccd0d4" shape-rendering="crispEdges"/><rect x="738" y="639" width="9" height="9" fill="#eeede9" shape-rendering="crispEdges"/><rect x="747" y="639" width="9" height="9" fill="#e2e4e6" shape-rendering="crispEdges"/><rect x="756" y="639" width="9" height="9" fill="#e6e6e6" shape-rendering="crispEdges"/><rect x="765" y="639" width="9" height="9" fill="#e6e4e4" shape-rendering="crispEdges"/><rect x="774" y="639" width="9" height="9" fill="#e4e4e4" shape-rendering="crispEdges"/><rect x="738" y="648" width="9" height="9" fill="#e6e4e0" shape-rendering="crispEdges"/><rect x="747" y="648" width="9" height="9" fill="#c4c6c8" shape-rendering="crispEdges"/><rect x="756" y="648" width="9" height="9" fill="#c8c8ca" shape-rendering="crispEdges"/><rect x="765" y="648" width="9" height="9" fill="#c8c6c4" shape-rendering="crispEdges"/><rect x="774" y="648" width="9" height="9" fill="#b8b8ba" shape-rendering="crispEdges"/><rect x="783" y="648" width="9" height="9" fill="#f4f8fa" shape-rendering="crispEdges"/><rect x="540" y="684" width="9" height="9" fill="#d0cecc" shape-rendering="crispEdges"/><rect x="549" y="684" width="9" height="9" fill="#bcbabc" shape-rendering="crispEdges"/><rect x="558" y="684" width="9" height="9" fill="#a09c98" shape-rendering="crispEdges"/><rect x="567" y="684" width="9" height="9" fill="#b4b6ba" shape-rendering="crispEdges"/><rect x="576" y="684" width="9" height="9" fill="#b8c0c8" shape-rendering="crispEdges"/><rect x="540" y="693" width="9" height="9" fill="#f0efed" shape-rendering="crispEdges"/><rect x="549" y="693" width="9" height="9" fill="#eeeeee" shape-rendering="crispEdges"/><rect x="558" y="693" width="9" height="9" fill="#f0f0f0" shape-rendering="crispEdges"/><rect x="567" y="693" width="9" height="9" fill="#eaeaea" shape-rendering="crispEdges"/><rect x="576" y="693" width="9" height="9" fill="#e8eaec" shape-rendering="crispEdges"/><rect x="738" y="684" width="9" height="9" fill="#e6e4e2" shape-rendering="crispEdges"/><rect x="747" y="684" width="9" height="9" fill="#a4a4aa" shape-rendering="crispEdges"/><rect x="756" y="684" width="9" height="9" fill="#b0aeac" shape-rendering="crispEdges"/><rect x="765" y="684" width="9" height="9" fill="#c8cacc" shape-rendering="crispEdges"/><rect x="774" y="684" width="9" height="9" fill="#cccccc" shape-rendering="crispEdges"/><rect x="783" y="684" width="9" height="9" fill="#f8f8fa" shape-rendering="crispEdges"/><rect x="738" y="693" width="9" height="9" fill="#f2f1ef" shape-rendering="crispEdges"/><rect x="747" y="693" width="9" height="9" fill="#e6e6e8" shape-rendering="crispEdges"/><rect x="756" y="693" width="9" height="9" fill="#e8e8e8" shape-rendering="crispEdges"/><rect x="765" y="693" width="9" height="9" fill="#e8e8e8" shape-rendering="crispEdges"/><rect x="774" y="693" width="9" height="9" fill="#e8e8e8" shape-rendering="crispEdges"/><rect x="783" y="693" width="9" height="9" fill="#f8f8fa" shape-rendering="crispEdges"/><rect x="540" y="720" width="9" height="9" fill="#c8c6c2" shape-rendering="crispEdges"/><rect x="549" y="720" width="9" height="9" fill="#d0d2d4" shape-rendering="crispEdges"/><rect x="558" y="720" width="9" height="9" fill="#c0bebe" shape-rendering="crispEdges"/><rect x="567" y="720" width="9" height="9" fill="#cccccc" shape-rendering="crispEdges"/><rect x="576" y="720" width="9" height="9" fill="#d0d0d2" shape-rendering="crispEdges"/><rect x="540" y="729" width="9" height="9" fill="#deddda" shape-rendering="crispEdges"/><rect x="549" y="729" width="9" height="9" fill="#e0e2e2" shape-rendering="crispEdges"/><rect x="558" y="729" width="9" height="9" fill="#d4d2d0" shape-rendering="crispEdges"/><rect x="567" y="729" width="9" height="9" fill="#e4e4e4" shape-rendering="crispEdges"/><rect x="576" y="729" width="9" height="9" fill="#e4e6e8" shape-rendering="crispEdges"/><rect x="738" y="720" width="9" height="9" fill="#eeedeb" shape-rendering="crispEdges"/><rect x="747" y="720" width="9" height="9" fill="#c0c2c8" shape-rendering="crispEdges"/><rect x="756" y="720" width="9" height="9" fill="#cccac8" shape-rendering="crispEdges"/><rect x="765" y="720" width="9" height="9" fill="#cccaca" shape-rendering="crispEdges"/><rect x="774" y="720" width="9" height="9" fill="#c0bebc" shape-rendering="crispEdges"/><rect x="783" y="720" width="9" height="9" fill="#e8eef2" shape-rendering="crispEdges"/><rect x="738" y="729" width="9" height="9" fill="#f0efed" shape-rendering="crispEdges"/><rect x="747" y="729" width="9" height="9" fill="#e0e2e6" shape-rendering="crispEdges"/><rect x="756" y="729" width="9" height="9" fill="#d8d6d4" shape-rendering="crispEdges"/><rect x="765" y="729" width="9" height="9" fill="#d8dadc" shape-rendering="crispEdges"/><rect x="774" y="729" width="9" height="9" fill="#dcdad6" shape-rendering="crispEdges"/><rect x="783" y="729" width="9" height="9" fill="#f0f4f8" shape-rendering="crispEdges"/><rect x="540" y="756" width="9" height="9" fill="#e4e2e2" shape-rendering="crispEdges"/><rect x="549" y="756" width="9" height="9" fill="#e6e4e4" shape-rendering="crispEdges"/><rect x="558" y="756" width="9" height="9" fill="#dee0e2" shape-rendering="crispEdges"/><rect x="567" y="756" width="9" height="9" fill="#e2dede" shape-rendering="crispEdges"/><rect x="576" y="756" width="9" height="9" fill="#e0e2e8" shape-rendering="crispEdges"/><rect x="540" y="765" width="9" height="9" fill="#d8d4d2" shape-rendering="crispEdges"/><rect x="549" y="765" width="9" height="9" fill="#c8cacc" shape-rendering="crispEdges"/><rect x="558" y="765" width="9" height="9" fill="#c8cac8" shape-rendering="crispEdges"/><rect x="567" y="765" width="9" height="9" fill="#ccc8c4" shape-rendering="crispEdges"/><rect x="576" y="765" width="9" height="9" fill="#c8ccd4" shape-rendering="crispEdges"/><rect x="738" y="756" width="9" height="9" fill="#f2f1ef" shape-rendering="crispEdges"/><rect x="747" y="756" width="9" height="9" fill="#d4d6da" shape-rendering="crispEdges"/><rect x="756" y="756" width="9" height="9" fill="#e4e4e4" shape-rendering="crispEdges"/><rect x="765" y="756" width="9" height="9" fill="#e4e2e0" shape-rendering="crispEdges"/><rect x="774" y="756" width="9" height="9" fill="#dcdee0" shape-rendering="crispEdges"/><rect x="783" y="756" width="9" height="9" fill="#f8f8f8" shape-rendering="crispEdges"/><rect x="738" y="765" width="9" height="9" fill="#f2f2f0" shape-rendering="crispEdges"/><rect x="747" y="765" width="9" height="9" fill="#cccccc" shape-rendering="crispEdges"/><rect x="756" y="765" width="9" height="9" fill="#c8c6c4" shape-rendering="crispEdges"/><rect x="765" y="765" width="9" height="9" fill="#c8c6c2" shape-rendering="crispEdges"/><rect x="774" y="765" width="9" height="9" fill="#b8bcc4" shape-rendering="crispEdges"/><rect x="783" y="765" width="9" height="9" fill="#f6f6f8" shape-rendering="crispEdges"/><rect x="540" y="801" width="9" height="9" fill="#b4b2ae" shape-rendering="crispEdges"/><rect x="549" y="801" width="9" height="9" fill="#b8babc" shape-rendering="crispEdges"/><rect x="558" y="801" width="9" height="9" fill="#d8d8d8" shape-rendering="crispEdges"/><rect x="567" y="801" width="9" height="9" fill="#c0bcba" shape-rendering="crispEdges"/><rect x="576" y="801" width="9" height="9" fill="#c8cacc" shape-rendering="crispEdges"/><rect x="540" y="810" width="9" height="9" fill="#f4f4f4" shape-rendering="crispEdges"/><rect x="549" y="810" width="9" height="9" fill="#f2f2f2" shape-rendering="crispEdges"/><rect x="558" y="810" width="9" height="9" fill="#f4f4f4" shape-rendering="crispEdges"/><rect x="567" y="810" width="9" height="9" fill="#f6f6f6" shape-rendering="crispEdges"/><rect x="576" y="810" width="9" height="9" fill="#f6f6f6" shape-rendering="crispEdges"/><rect x="747" y="792" width="9" height="9" fill="#f6f6f6" shape-rendering="crispEdges"/><rect x="756" y="792" width="9" height="9" fill="#f8f8f6" shape-rendering="crispEdges"/><rect x="765" y="792" width="9" height="9" fill="#f0f0f0" shape-rendering="crispEdges"/><rect x="738" y="801" width="9" height="9" fill="#f0eeea" shape-rendering="crispEdges"/><rect x="747" y="801" width="9" height="9" fill="#b0b2b8" shape-rendering="crispEdges"/><rect x="756" y="801" width="9" height="9" fill="#c0bebc" shape-rendering="crispEdges"/><rect x="765" y="801" width="9" height="9" fill="#c4c0b8" shape-rendering="crispEdges"/><rect x="774" y="801" width="9" height="9" fill="#b8c0c8" shape-rendering="crispEdges"/><rect x="783" y="801" width="9" height="9" fill="#f8f8fa" shape-rendering="crispEdges"/><rect x="747" y="810" width="9" height="9" fill="#f4f4f4" shape-rendering="crispEdges"/><rect x="756" y="810" width="9" height="9" fill="#f4f2f2" shape-rendering="crispEdges"/><rect x="765" y="810" width="9" height="9" fill="#f4f4f4" shape-rendering="crispEdges"/><rect x="774" y="810" width="9" height="9" fill="#e8e8ea" shape-rendering="crispEdges"/><rect x="783" y="810" width="9" height="9" fill="#f6f8fc" shape-rendering="crispEdges"/><rect x="540" y="837" width="9" height="9" fill="#cccac8" shape-rendering="crispEdges"/><rect x="549" y="837" width="9" height="9" fill="#cac8c6" shape-rendering="crispEdges"/><rect x="558" y="837" width="9" height="9" fill="#c4c8ca" shape-rendering="crispEdges"/><rect x="567" y="837" width="9" height="9" fill="#ccccca" shape-rendering="crispEdges"/><rect x="576" y="837" width="9" height="9" fill="#ccced0" shape-rendering="crispEdges"/><rect x="540" y="846" width="9" height="9" fill="#eeeeec" shape-rendering="crispEdges"/><rect x="549" y="846" width="9" height="9" fill="#e6e2e0" shape-rendering="crispEdges"/><rect x="558" y="846" width="9" height="9" fill="#d8dcde" shape-rendering="crispEdges"/><rect x="567" y="846" width="9" height="9" fill="#e0e2e4" shape-rendering="crispEdges"/><rect x="576" y="846" width="9" height="9" fill="#e0e0e0" shape-rendering="crispEdges"/><rect x="738" y="837" width="9" height="9" fill="#eceae8" shape-rendering="crispEdges"/><rect x="747" y="837" width="9" height="9" fill="#b8bcc4" shape-rendering="crispEdges"/><rect x="756" y="837" width="9" height="9" fill="#cccac8" shape-rendering="crispEdges"/><rect x="765" y="837" width="9" height="9" fill="#cccac6" shape-rendering="crispEdges"/><rect x="774" y="837" width="9" height="9" fill="#c4c8cc" shape-rendering="crispEdges"/><rect x="783" y="837" width="9" height="9" fill="#f8f8f8" shape-rendering="crispEdges"/><rect x="738" y="846" width="9" height="9" fill="#f8f8f8" shape-rendering="crispEdges"/><rect x="747" y="846" width="9" height="9" fill="#e2e2e2" shape-rendering="crispEdges"/><rect x="756" y="846" width="9" height="9" fill="#e0dedc" shape-rendering="crispEdges"/><rect x="765" y="846" width="9" height="9" fill="#e2e2e2" shape-rendering="crispEdges"/><rect x="774" y="846" width="9" height="9" fill="#d0d4d8" shape-rendering="crispEdges"/><rect x="783" y="846" width="9" height="9" fill="#f6f6f8" shape-rendering="crispEdges"/></svg>

<i class="vl" style="left:484px"></i>
<i class="vl" style="left:525px"></i>
<i class="vl" style="left:626px"></i>
<i class="vl" style="left:727px"></i>
<i class="vl" style="left:828px"></i>
<i class="vl" style="left:929px"></i>
<i class="vl" style="left:1030px"></i>
<i class="vl" style="left:1131px"></i>
<i class="vl" style="left:1232px"></i>
<i class="vl" style="left:1333px"></i>
<i class="vl" style="left:1434px"></i>
<i class="vl" style="left:1535px"></i>
<i class="vl" style="left:1636px"></i>
<i class="vl" style="left:1841px"></i>
<div class="th l" style="left:526px;top:359px;width:100px">姓名</div>
<div class="th l" style="left:627px;top:359px;width:100px">计划名称</div>
<div class="th l" style="left:728px;top:359px;width:100px">班主任</div>
<div class="th l" style="left:829px;top:359px;width:100px">内容</div>
<div class="th c" style="left:930px;top:359px;width:100px">日期</div>
<div class="th c" style="left:1031px;top:359px;width:100px">批阅状态</div>
<div class="th c" style="left:1132px;top:359px;width:100px">是否推优</div>
<div class="th c" style="left:1233px;top:359px;width:100px">类型</div>
<div class="th c" style="left:1334px;top:359px;width:100px">最少实习…</div>
<div class="th c" style="left:1435px;top:359px;width:100px">得分</div>
<div class="th c" style="left:1529px;top:359px;width:100px">老师评语</div>
<div class="th c" style="left:1637px;top:359px;width:204px">操作</div>
<i class="cb" style="left:451px;top:370px"></i>
<i id="fshadow"></i>
<div id="vsb"><i class="up"></i><i class="th2"></i><i class="dn"></i></div>
<div id="pg"></div>
<svg class="abs" style="left:452px;top:885px" width="9" height="14" viewBox="0 0 9 14"><path d="M7.6 1 L1.4 7 L7.6 13" fill="none" stroke="#d2d2d2" stroke-width="1.2"/></svg>
<div class="abs pcur" style="left:475px;top:879px">1</div>
<div class="abs pn" style="left:510px">2</div>
<div class="abs pn" style="left:540px">3</div>
<div class="abs pn" style="left:569px">4</div>
<svg class="abs" style="left:609px;top:885px" width="9" height="14" viewBox="0 0 9 14"><path d="M1.4 1 L7.6 7 L1.4 13" fill="none" stroke="#444" stroke-width="1.3"/></svg>
<div class="abs pt" style="left:633px;color:#999">到第</div>
<div class="abs pin" style="left:667px;top:879px;width:40px">1</div>
<div class="abs pt" style="left:716px;color:#999">页</div>
<div class="abs pin" style="left:739px;top:879px;width:46px;color:#333">确定</div>
<div class="abs pt" style="left:795px;color:#333">合计:<span style="margin-left:12px">80 条</span></div>
<div class="abs pin" style="left:873px;top:879px;width:79px;text-align:left;padding-left:7px;color:#222">20 条/页<svg class="abs" style="left:64px;top:10px" width="10" height="7" viewBox="0 0 10 7"><path d="M1 1 L5 5.4 L9 1" fill="none" stroke="#111" stroke-width="1.8"/></svg></div>
</div></div>

<svg class="abs" style="left:0;top:0" width="1869" height="912" viewBox="0 0 1869 912"><g fill="#f8383a"><path d="M1485.8 244.6 L1530.9 308.2 L1526.0 309.6 L1541.8 317.5 L1538.5 300.2 L1535.8 304.5 L1486.6 244.0Z"/><path d="M1630.6 472.3 L1695.8 427.5 L1697.0 432.2 L1705.5 417.0 L1688.4 420.2 L1692.5 422.8 L1629.4 470.7Z"/></g></svg>
<div class="tip" style="left:169px;top:378px;width:288px;height:48px;line-height:50px;padding-left:6px">打开学生实习汇报列表<i class="tarr" style="left:-6px;top:17px"></i></div>
<div class="bdg" style="left:139px;top:392px">1</div>
<div class="tip" style="left:1229px;top:159px;width:423px;height:84px;line-height:36px;padding:7px 0 0 6px">勾选学生后可点击批量批阅按钮，<br>可同时批阅多条实习汇报<i class="tarr" style="left:-6px;top:17px"></i></div>
<div class="bdg" style="left:1200px;top:173px">3</div>
<div class="tip" style="left:1362px;top:470px;width:423px;height:48px;line-height:51px;padding-left:6px">点击批阅按钮，批阅一条实习汇报<i class="tarr" style="left:-6px;top:18px"></i></div>
<div class="bdg" style="left:1333px;top:485px">2</div>
<div class="abs" style="left:1627px;top:829px;font-size:20px;line-height:26px;color:rgba(120,120,120,.55);white-space:nowrap">激活 <span style="letter-spacing:1.05px">Windows</span></div>
<div class="abs" style="left:1627px;top:857px;font-size:15px;line-height:20px;color:rgba(120,120,120,.55);white-space:nowrap;letter-spacing:.55px">转到“设置”以激活 Windows。</div>

</body></html>
